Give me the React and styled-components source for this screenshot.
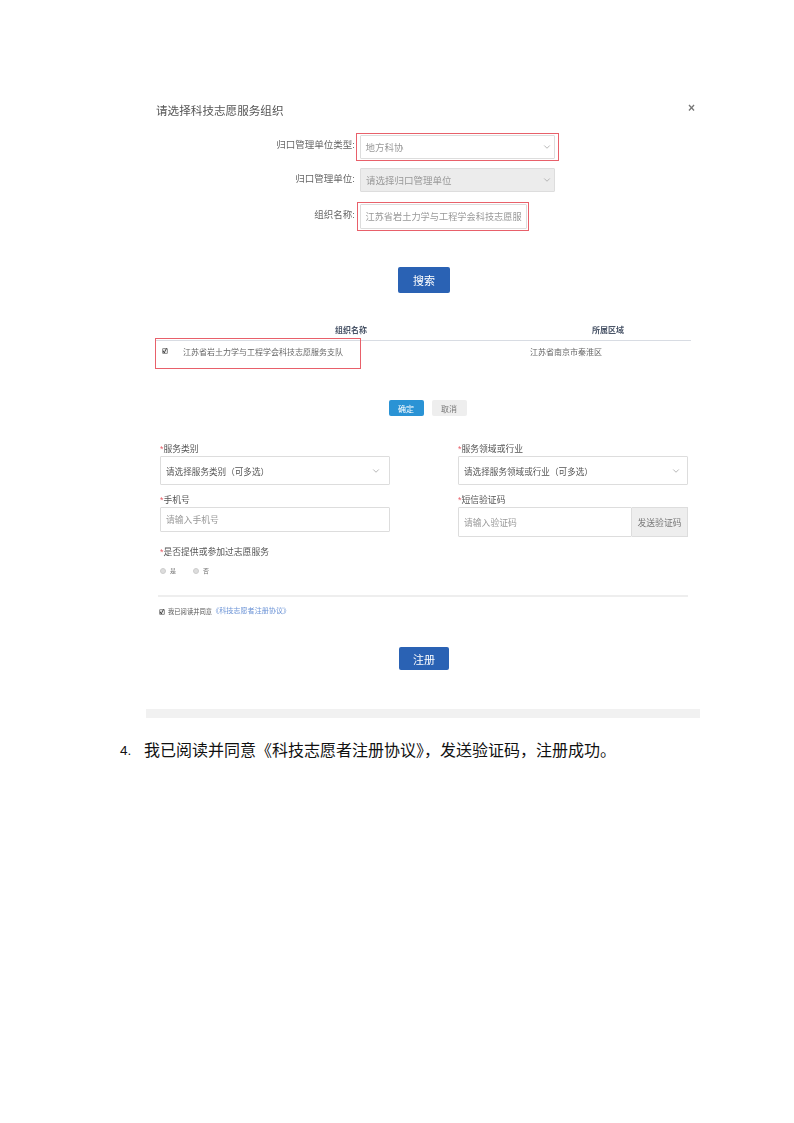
import React from "react";
import styled, { createGlobalStyle } from "styled-components";
import { ChevronDown } from "lucide-react";

const GlobalStyle = createGlobalStyle`
  html, body {
    margin: 0;
    padding: 0;
    background: #fff;
  }
  body {
    font-family: "Liberation Sans", "Noto Sans CJK SC", sans-serif;
  }
`;

const Page = styled.div`
  width: 794px;
  height: 1123px;
  overflow: hidden;
  background: #fff;
  padding-top: 95px;
  box-sizing: border-box;
`;

const Shot = styled.div`
  width: 554px;
  margin-left: 146px;
  filter: blur(0.5px);
`;

const ModalHeader = styled.div`
  height: 30px;
  padding: 0 5px 0 10px;
  display: flex;
  align-items: center;
  justify-content: space-between;
`;

const ModalTitle = styled.div`
  font-size: 11.6px;
  color: #555;
`;

const Close = styled.div`
  font-size: 12px;
  font-weight: bold;
  color: #777;
  padding-bottom: 5px;
`;

const SearchForm = styled.div`
  display: flex;
  flex-direction: column;
  gap: 10px;
  padding-top: 10px;
`;

const SearchRow = styled.div`
  display: grid;
  grid-template-columns: 209px 1fr;
  column-gap: 5px;
  align-items: center;
  margin-top: ${(p) => p.$top || 0}px;
`;

const SearchLabel = styled.div`
  font-size: 9.5px;
  color: #666;
  text-align: right;
  white-space: nowrap;
  padding-bottom: 5px;
`;

const Marked = styled.div`
  width: fit-content;
  margin: -2.5px ${(p) => -p.$inset}px;
  padding: 1px ${(p) => p.$inset - 1.5}px;
  border: 1.5px solid #e8606a;
`;

const Select = styled.div`
  box-sizing: border-box;
  width: ${(p) => p.$width || 230}px;
  height: ${(p) => p.$height || 29}px;
  padding: 0 ${(p) => p.$right || 8}px 0 5px;
  display: flex;
  align-items: center;
  justify-content: space-between;
  font-size: ${(p) => p.$size || 9.5}px;
  color: ${(p) => p.$color || "#999"};
  white-space: nowrap;
  border: 1px solid #ddd;
  border-radius: 1px;
  background: ${(p) => (p.$disabled ? "#ececec" : "#fff")};
`;

const Arrow = styled(ChevronDown)`
  width: 10px;
  height: 10px;
  color: #aaa;
  flex: none;
`;

const BlueButton = styled.div`
  box-sizing: border-box;
  width: ${(p) => p.$width}px;
  height: ${(p) => p.$height}px;
  margin: ${(p) => p.$top}px 0 0 ${(p) => p.$left}px;
  display: flex;
  align-items: center;
  justify-content: center;
  background: #2a62b4;
  border-radius: 2px;
  color: #fff;
  font-size: 11px;
`;

const Table = styled.div`
  position: relative;
  margin: 26px 9px 0;
`;

const TableHead = styled.div`
  display: flex;
  height: 22px;
  align-items: center;
  border-bottom: 1px solid #d8dce3;
  box-sizing: border-box;
  font-size: 8px;
  font-weight: bold;
  color: #4a5568;
`;

const TableRow = styled.div`
  display: flex;
  height: 20px;
  align-items: center;
  font-size: 8px;
  color: #666;
`;

const HeadName = styled.div`
  width: 212px;
  text-align: right;
`;

const HeadArea = styled.div`
  margin-left: 225px;
`;

const Check = styled.span`
  box-sizing: border-box;
  width: 6px;
  height: 6px;
  flex: none;
  display: inline-flex;
  align-items: center;
  justify-content: center;
  background: #e4e4e4;
  border: 1px solid #999;
  border-radius: 1px;
  color: #222;
  font-size: 6px;
  font-weight: bold;
  line-height: 1;
`;

const RowCheck = styled(Check)`
  margin: 0 15px 0 7px;
`;

const RowName = styled.div`
  width: 347px;
`;

const RedMark = styled.div`
  position: absolute;
  left: 0;
  top: 19px;
  width: 206px;
  height: 31px;
  box-sizing: border-box;
  border: 1.5px solid #e8606a;
`;

const Actions = styled.div`
  display: flex;
  justify-content: center;
  gap: 8px;
  margin-top: 39px;
  padding-left: 9px;
`;

const SmallButton = styled.div`
  width: 35px;
  height: 16px;
  display: flex;
  align-items: center;
  justify-content: center;
  border-radius: 2px;
  font-size: 8px;
  color: ${(p) => (p.$primary ? "#fff" : "#777")};
  background: ${(p) => (p.$primary ? "#2a93d5" : "#eee")};
`;

const Fields = styled.div`
  display: grid;
  grid-template-columns: 230px 230px;
  column-gap: 68px;
  row-gap: 9px;
  align-items: start;
  padding: 27px 12px 0 14px;
`;

const Field = styled.div`
  display: flex;
  flex-direction: column;
  gap: 1px;
`;

const FieldLabel = styled.div`
  font-size: 8.8px;
  line-height: 12px;
  color: #555;
  &::before {
    content: "*";
    color: #e8606a;
  }
`;

const InputGroup = styled.div`
  display: flex;
  width: 230px;
`;

const Addon = styled.div`
  box-sizing: border-box;
  width: 56px;
  height: 30px;
  flex: none;
  display: flex;
  align-items: center;
  justify-content: center;
  background: #eee;
  border: 1px solid #ddd;
  border-left: 0;
  font-size: 8.8px;
  color: #777;
`;

const RadioBlock = styled.div`
  padding: 9px 14px 0;
`;

const RadioRow = styled.div`
  display: flex;
  gap: 17px;
  margin-top: 8px;
  font-size: 6px;
  color: #777;
`;

const RadioItem = styled.label`
  display: flex;
  align-items: center;
  gap: 4px;
`;

const Radio = styled.span`
  width: 6px;
  height: 6px;
  border-radius: 50%;
  background: #ddd;
  border: 1px solid #ccc;
  box-sizing: border-box;
`;

const Divider = styled.div`
  height: 2px;
  margin: 20px 12px 0;
  background: #eee;
`;

const Agree = styled.div`
  display: flex;
  align-items: center;
  gap: 3px;
  margin: 10px 0 0 13px;
  font-size: 6.3px;
  line-height: 9px;
  color: #555;
`;

const AgreeLink = styled.span`
  font-size: 7.1px;
  color: #6b93d6;
  margin-left: -3px;
`;

const BottomBar = styled.div`
  height: 9px;
  margin-top: 39px;
  background: #f1f1f1;
`;

const Step = styled.div`
  display: flex;
  margin: 23px 0 0 120px;
  font-size: 16px;
  line-height: 20px;
  color: #111;
`;

const StepNum = styled.span`
  width: 24px;
  font-size: 13.5px;
  font-family: "Liberation Sans", sans-serif;
`;

const App = () => {
  return (
    <Page>
      <GlobalStyle />
      <Shot>
        <ModalHeader>
          <ModalTitle>请选择科技志愿服务组织</ModalTitle>
          <Close>×</Close>
        </ModalHeader>
        <SearchForm>
          <SearchRow>
            <SearchLabel>归口管理单位类型:</SearchLabel>
            <Marked $inset={4.5}>
              <Select $width={195} $height={24} $right={2}>
                地方科协
                <Arrow />
              </Select>
            </Marked>
          </SearchRow>
          <SearchRow>
            <SearchLabel>归口管理单位:</SearchLabel>
            <Select $width={195} $height={24} $right={2} $disabled>
              请选择归口管理单位
              <Arrow />
            </Select>
          </SearchRow>
          <SearchRow $top={2}>
            <SearchLabel>组织名称:</SearchLabel>
            <Marked $inset={3}>
              <Select $width={167} $height={25} $size={9.2}>
                江苏省岩土力学与工程学会科技志愿服
              </Select>
            </Marked>
          </SearchRow>
        </SearchForm>
        <BlueButton $width={52} $height={26} $top={39} $left={252}>
          搜索
        </BlueButton>
        <Table>
          <TableHead>
            <HeadName>组织名称</HeadName>
            <HeadArea>所属区域</HeadArea>
          </TableHead>
          <TableRow>
            <RowCheck>✓</RowCheck>
            <RowName>江苏省岩土力学与工程学会科技志愿服务支队</RowName>
            <span>江苏省南京市秦淮区</span>
          </TableRow>
          <RedMark />
        </Table>
        <Actions>
          <SmallButton $primary>确定</SmallButton>
          <SmallButton>取消</SmallButton>
        </Actions>
        <Fields>
          <Field>
            <FieldLabel>服务类别</FieldLabel>
            <Select $size={8.6} $color="#555">
              请选择服务类别（可多选）
              <Arrow />
            </Select>
          </Field>
          <Field>
            <FieldLabel>服务领域或行业</FieldLabel>
            <Select $size={8.6} $color="#555" $right={6}>
              请选择服务领域或行业（可多选）
              <Arrow />
            </Select>
          </Field>
          <Field>
            <FieldLabel>手机号</FieldLabel>
            <Select $height={25} $size={8.8}>
              请输入手机号
            </Select>
          </Field>
          <Field>
            <FieldLabel>短信验证码</FieldLabel>
            <InputGroup>
              <Select $width={174} $height={30} $size={8.8}>
                请输入验证码
              </Select>
              <Addon>发送验证码</Addon>
            </InputGroup>
          </Field>
        </Fields>
        <RadioBlock>
          <FieldLabel>是否提供或参加过志愿服务</FieldLabel>
          <RadioRow>
            <RadioItem>
              <Radio />是
            </RadioItem>
            <RadioItem>
              <Radio />否
            </RadioItem>
          </RadioRow>
        </RadioBlock>
        <Divider />
        <Agree>
          <Check>✓</Check>
          我已阅读并同意
          <AgreeLink>《科技志愿者注册协议》</AgreeLink>
        </Agree>
        <BlueButton $width={50} $height={23} $top={31} $left={253}>
          注册
        </BlueButton>
        <BottomBar />
      </Shot>
      <Step>
        <StepNum>4.</StepNum>
        我已阅读并同意《科技志愿者注册协议》，发送验证码，注册成功。
      </Step>
    </Page>
  );
};

export default App;
